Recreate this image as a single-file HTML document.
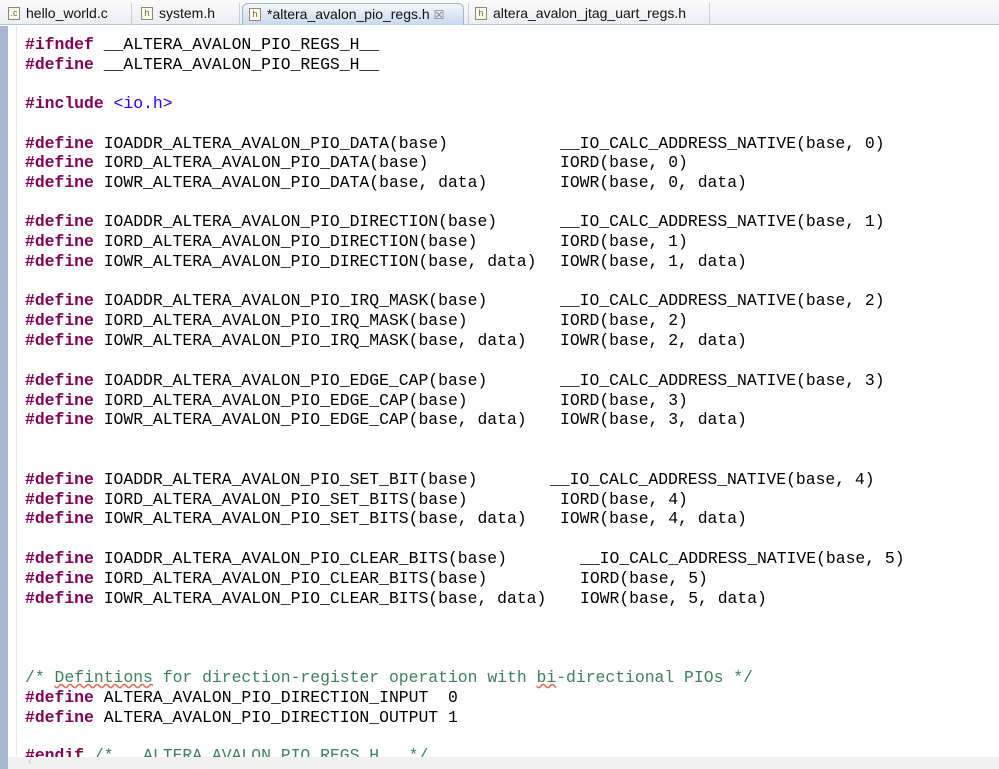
<!DOCTYPE html>
<html><head><meta charset="utf-8"><style>
*{margin:0;padding:0;box-sizing:border-box}
body{width:999px;height:769px;overflow:hidden;background:#fff;position:relative;font-family:"Liberation Sans",sans-serif}
#tabs{position:absolute;left:0;top:0;width:999px;height:25px;background:linear-gradient(#fbfbfb,#eceef2);border-bottom:1px solid #b5c4dc}
.tab{position:absolute;top:3px;height:22px;font-size:14px;color:#111;line-height:21px;padding-left:24px;border-right:1px solid #c9ced6}
.tab.act{background:linear-gradient(#f4f7fb,#c9d8ee);border:1px solid #9fb3d3;border-bottom:none;border-radius:6px 6px 0 0}
.ic{position:absolute;left:6px;top:4px;width:12px;height:13px;border:1px solid #8a8a7a;background:#fffbe8;font-size:9px;line-height:11px;text-align:center;color:#665}
#lstrip{position:absolute;left:0;top:26px;width:8px;height:743px;background:#a6b6d0}
#gut{position:absolute;left:16px;top:26px;width:1px;height:730px;background:#e6e6e6}
#bot{position:absolute;left:8px;top:757px;width:991px;height:12px;background:#f0f0f0}
.l{position:absolute;font-family:"Liberation Mono",monospace;font-size:16.4px;line-height:20px;white-space:pre;color:#000}
.k{color:#7f0055;font-weight:bold}
.s{color:#2a00ff}
.c{color:#3f7f5f}
</style></head><body>
<div id="tabs">
<div class="tab" style="left:2px;width:130px"><span class="ic">.c</span>hello_world.c</div>
<div class="tab" style="left:135px;width:105px"><span class="ic">h</span>system.h</div>
<div class="tab act" style="left:242px;width:222px"><span class="ic">h</span>*altera_avalon_pio_regs.h <span style="color:#777;font-size:12px">&#x2612;</span></div>
<div class="tab" style="left:468px;width:242px;border-left:1px solid #c9ced6"><span class="ic">h</span>altera_avalon_jtag_uart_regs.h</div>
</div>
<div id="lstrip"></div><div id="gut"></div>

<div class="l" style="left:25px;top:35px"><span class="k">#ifndef</span> __ALTERA_AVALON_PIO_REGS_H__</div>
<div class="l" style="left:25px;top:55px"><span class="k">#define</span> __ALTERA_AVALON_PIO_REGS_H__</div>
<div class="l" style="left:25px;top:94px"><span class="k">#include</span> <span class="s">&lt;io.h&gt;</span></div>

<div class="l" style="left:25px;top:134px"><span class="k">#define</span> IOADDR_ALTERA_AVALON_PIO_DATA(base)</div><div class="l" style="left:560px;top:134px">__IO_CALC_ADDRESS_NATIVE(base, 0)</div>
<div class="l" style="left:25px;top:153px"><span class="k">#define</span> IORD_ALTERA_AVALON_PIO_DATA(base)</div><div class="l" style="left:560px;top:153px">IORD(base, 0)</div>
<div class="l" style="left:25px;top:173px"><span class="k">#define</span> IOWR_ALTERA_AVALON_PIO_DATA(base, data)</div><div class="l" style="left:560px;top:173px">IOWR(base, 0, data)</div>

<div class="l" style="left:25px;top:212px"><span class="k">#define</span> IOADDR_ALTERA_AVALON_PIO_DIRECTION(base)</div><div class="l" style="left:560px;top:212px">__IO_CALC_ADDRESS_NATIVE(base, 1)</div>
<div class="l" style="left:25px;top:232px"><span class="k">#define</span> IORD_ALTERA_AVALON_PIO_DIRECTION(base)</div><div class="l" style="left:560px;top:232px">IORD(base, 1)</div>
<div class="l" style="left:25px;top:252px"><span class="k">#define</span> IOWR_ALTERA_AVALON_PIO_DIRECTION(base, data)</div><div class="l" style="left:560px;top:252px">IOWR(base, 1, data)</div>

<div class="l" style="left:25px;top:291px"><span class="k">#define</span> IOADDR_ALTERA_AVALON_PIO_IRQ_MASK(base)</div><div class="l" style="left:560px;top:291px">__IO_CALC_ADDRESS_NATIVE(base, 2)</div>
<div class="l" style="left:25px;top:311px"><span class="k">#define</span> IORD_ALTERA_AVALON_PIO_IRQ_MASK(base)</div><div class="l" style="left:560px;top:311px">IORD(base, 2)</div>
<div class="l" style="left:25px;top:331px"><span class="k">#define</span> IOWR_ALTERA_AVALON_PIO_IRQ_MASK(base, data)</div><div class="l" style="left:560px;top:331px">IOWR(base, 2, data)</div>

<div class="l" style="left:25px;top:371px"><span class="k">#define</span> IOADDR_ALTERA_AVALON_PIO_EDGE_CAP(base)</div><div class="l" style="left:560px;top:371px">__IO_CALC_ADDRESS_NATIVE(base, 3)</div>
<div class="l" style="left:25px;top:391px"><span class="k">#define</span> IORD_ALTERA_AVALON_PIO_EDGE_CAP(base)</div><div class="l" style="left:560px;top:391px">IORD(base, 3)</div>
<div class="l" style="left:25px;top:410px"><span class="k">#define</span> IOWR_ALTERA_AVALON_PIO_EDGE_CAP(base, data)</div><div class="l" style="left:560px;top:410px">IOWR(base, 3, data)</div>

<div class="l" style="left:25px;top:470px"><span class="k">#define</span> IOADDR_ALTERA_AVALON_PIO_SET_BIT(base)</div><div class="l" style="left:550px;top:470px">__IO_CALC_ADDRESS_NATIVE(base, 4)</div>
<div class="l" style="left:25px;top:490px"><span class="k">#define</span> IORD_ALTERA_AVALON_PIO_SET_BITS(base)</div><div class="l" style="left:560px;top:490px">IORD(base, 4)</div>
<div class="l" style="left:25px;top:509px"><span class="k">#define</span> IOWR_ALTERA_AVALON_PIO_SET_BITS(base, data)</div><div class="l" style="left:560px;top:509px">IOWR(base, 4, data)</div>

<div class="l" style="left:25px;top:549px"><span class="k">#define</span> IOADDR_ALTERA_AVALON_PIO_CLEAR_BITS(base)</div><div class="l" style="left:580px;top:549px">__IO_CALC_ADDRESS_NATIVE(base, 5)</div>
<div class="l" style="left:25px;top:569px"><span class="k">#define</span> IORD_ALTERA_AVALON_PIO_CLEAR_BITS(base)</div><div class="l" style="left:580px;top:569px">IORD(base, 5)</div>
<div class="l" style="left:25px;top:589px"><span class="k">#define</span> IOWR_ALTERA_AVALON_PIO_CLEAR_BITS(base, data)</div><div class="l" style="left:580px;top:589px">IOWR(base, 5, data)</div>

<div class="l c" style="left:25px;top:668px">/* <span style="text-decoration:underline wavy #e07060">Defintions</span> for direction-register operation with <span style="text-decoration:underline wavy #e07060">bi</span>-directional PIOs */</div>
<div class="l" style="left:25px;top:688px"><span class="k">#define</span> ALTERA_AVALON_PIO_DIRECTION_INPUT  0</div>
<div class="l" style="left:25px;top:708px"><span class="k">#define</span> ALTERA_AVALON_PIO_DIRECTION_OUTPUT 1</div>
<div class="l" style="left:25px;top:746px"><span class="k">#endif</span> <span class="c">/* __ALTERA_AVALON_PIO_REGS_H__ */</span></div>
<div id="bot"><span style="position:absolute;left:20px;top:-3px;color:#bbb;font-size:12px">&lsaquo;</span></div>
</body></html>
